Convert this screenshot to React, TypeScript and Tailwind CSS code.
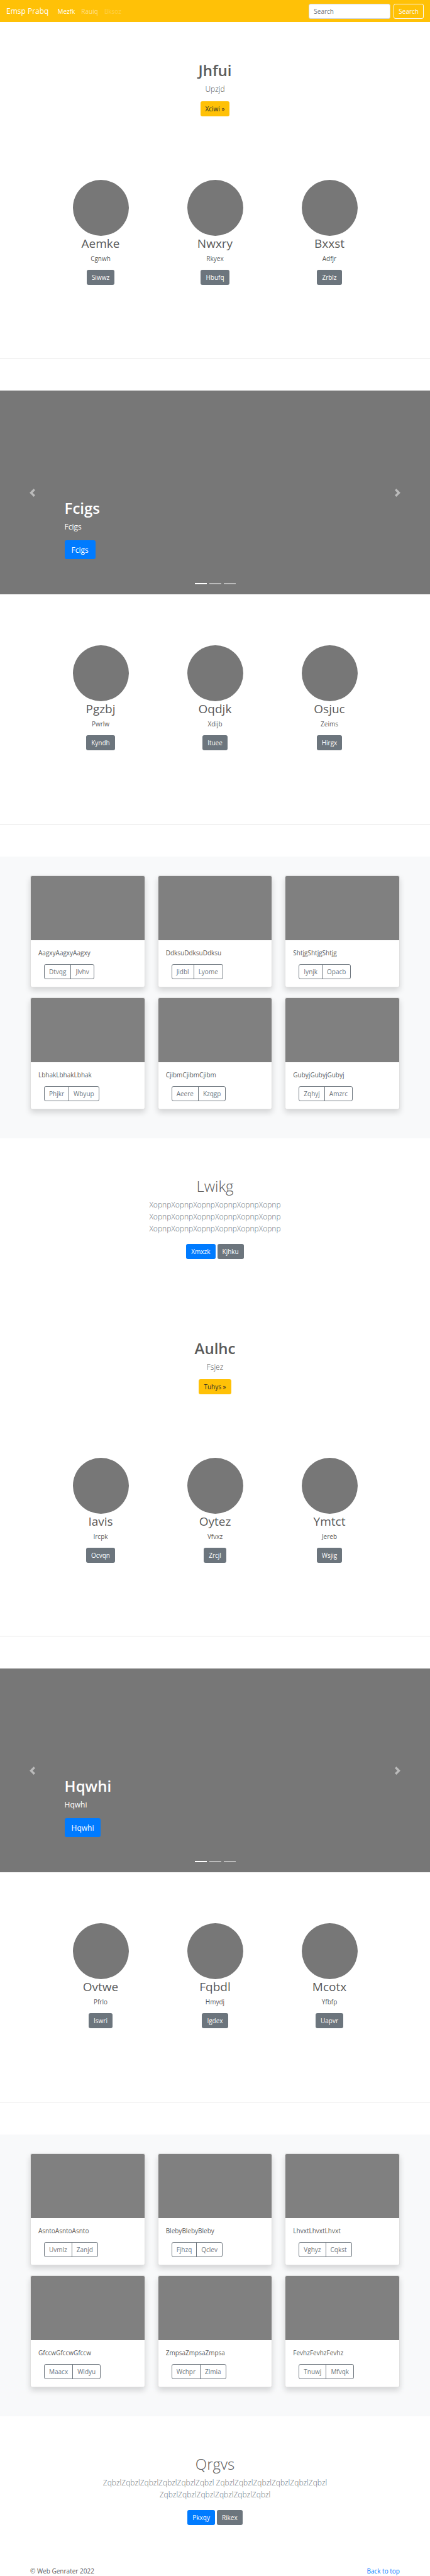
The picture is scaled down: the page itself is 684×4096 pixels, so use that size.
type Feature = { title: string; text: string; action: string };
type Album = { text: string; actions: [string, string] };
type Tone = "warning" | "primary" | "secondary";
type PageBlock = {
  hero: Feature;
  featuresTop: Feature[];
  slide: string;
  featuresBottom: Feature[];
  albums: Album[];
  closing: { title: string; text: string; primary: string; secondary: string };
};

const blocks: PageBlock[] = [
  {
    hero: { title: "Jhfui", text: "Upzjd", action: "Xciwi »" },
    featuresTop: [
      { title: "Aemke", text: "Cgnwh", action: "Siwwz" },
      { title: "Nwxry", text: "Rkyex", action: "Hbufq" },
      { title: "Bxxst", text: "Adfjr", action: "Zrblz" },
    ],
    slide: "Fcigs",
    featuresBottom: [
      { title: "Pgzbj", text: "Pwrlw", action: "Kyndh" },
      { title: "Oqdjk", text: "Xdijb", action: "Ituee" },
      { title: "Osjuc", text: "Zeims", action: "Hirgx" },
    ],
    albums: [
      { text: "AagxyAagxyAagxy", actions: ["Dtvqg", "Jlvhv"] },
      { text: "DdksuDdksuDdksu", actions: ["Jidbl", "Lyome"] },
      { text: "ShtjgShtjgShtjg", actions: ["Iynjk", "Opacb"] },
      { text: "LbhakLbhakLbhak", actions: ["Phjkr", "Wbyup"] },
      { text: "CjibmCjibmCjibm", actions: ["Aeere", "Kzqgp"] },
      { text: "GubyjGubyjGubyj", actions: ["Zqhyj", "Amzrc"] },
    ],
    closing: {
      title: "Lwikg",
      text: "XopnpXopnpXopnpXopnpXopnpXopnp XopnpXopnpXopnpXopnpXopnpXopnp XopnpXopnpXopnpXopnpXopnpXopnp",
      primary: "Xmxzk",
      secondary: "Kjhku",
    },
  },
  {
    hero: { title: "Aulhc", text: "Fsjez", action: "Tuhys »" },
    featuresTop: [
      { title: "Iavis", text: "Ircpk", action: "Ocvqn" },
      { title: "Oytez", text: "Vfvxz", action: "Zrcjl" },
      { title: "Ymtct", text: "Jereb", action: "Wsjig" },
    ],
    slide: "Hqwhi",
    featuresBottom: [
      { title: "Ovtwe", text: "Pfrlo", action: "Iswri" },
      { title: "Fqbdl", text: "Hmydj", action: "Igdex" },
      { title: "Mcotx", text: "Yfbfp", action: "Uapvr" },
    ],
    albums: [
      { text: "AsntoAsntoAsnto", actions: ["Uvmlz", "Zanjd"] },
      { text: "BlebyBlebyBleby", actions: ["Fjhzq", "Qclev"] },
      { text: "LhvxtLhvxtLhvxt", actions: ["Vghyz", "Cqkst"] },
      { text: "GfccwGfccwGfccw", actions: ["Maacx", "Widyu"] },
      { text: "ZmpsaZmpsaZmpsa", actions: ["Wchpr", "Zlmia"] },
      { text: "FevhzFevhzFevhz", actions: ["Tnuwj", "Mfvqk"] },
    ],
    closing: {
      title: "Qrgvs",
      text: "ZqbzlZqbzlZqbzlZqbzlZqbzlZqbzl ZqbzlZqbzlZqbzlZqbzlZqbzlZqbzl ZqbzlZqbzlZqbzlZqbzlZqbzlZqbzl",
      primary: "Pkxqy",
      secondary: "Rikex",
    },
  },
];

const tones: Record<Tone, string> = {
  warning: "bg-[#ffc107] text-[#212529]",
  primary: "bg-[#007bff] text-white",
  secondary: "bg-[#6c757d] text-white",
};

function Btn({ tone, children }: { tone: Tone; children: string }) {
  return (
    <button type="button" className={`h-6 rounded-[3px] px-2 text-[10px] leading-4 ${tones[tone]}`}>
      {children}
    </button>
  );
}

function Navbar() {
  return (
    <header className="flex h-[35px] items-center bg-[#ffc107] px-[10px] text-white">
      <a href="#top" className="mr-[14px] text-[12px] leading-5">
        Emsp Prabq
      </a>
      <nav className="flex flex-1 gap-[10px] text-[10px] leading-4">
        <a href="#home">Mezfk</a>
        <a href="#link" className="text-white/50">
          Rauiq
        </a>
        <a href="#disabled" aria-disabled="true" className="text-white/25">
          Bksoz
        </a>
      </nav>
      <form className="flex gap-[5px]" onSubmit={(e) => e.preventDefault()}>
        <input
          type="search"
          aria-label="Search"
          placeholder="Search"
          className="h-6 w-[130px] rounded-[3px] border border-[#ced4da] bg-white px-[7px] text-[10px] leading-4 text-[#495057] placeholder:text-[#6c757d]"
        />
        <button type="submit" className="h-6 rounded-[3px] border border-[#f8f9fa] px-[7px] text-[10px] leading-4 text-[#f8f9fa]">
          Search
        </button>
      </form>
    </header>
  );
}

function Hero({ title, text, action }: Feature) {
  return (
    <section className="flex flex-col items-center pt-[62px] text-center">
      <h1 className="text-[24px] leading-[30px] font-semibold">{title}</h1>
      <p className="mt-[5px] mb-[10px] text-[12px] leading-[19px] font-light">{text}</p>
      <Btn tone="warning">{action}</Btn>
    </section>
  );
}

function Features({ items }: { items: Feature[] }) {
  return (
    <section className="grid grid-cols-3 px-[69px]">
      {items.map((item) => (
        <div key={item.title} className="flex flex-col items-center text-center">
          <div className="size-[89px] rounded-full bg-[#777]" />
          <h2 className="text-[19px] leading-6">{item.title}</h2>
          <p className="mt-[5px] mb-[10px] text-[10px] leading-[15px]">{item.text}</p>
          <Btn tone="secondary">{item.action}</Btn>
        </div>
      ))}
    </section>
  );
}

function Chevron({ d }: { d: string }) {
  return (
    <svg viewBox="0 0 8 8" className="size-[13px] fill-white" aria-hidden="true">
      <path d={d} />
    </svg>
  );
}

function Carousel({ label }: { label: string }) {
  return (
    <section className="relative flex h-[324px] bg-[#777] text-white">
      <button type="button" aria-label="Previous" className="flex w-[15%] items-center justify-center opacity-50">
        <Chevron d="M5.25 0l-4 4 4 4 1.5-1.5-2.5-2.5 2.5-2.5-1.5-1.5z" />
      </button>
      <div className="flex flex-1 flex-col items-start justify-end pb-14">
        <h2 className="text-[24px] leading-[30px] font-semibold">{label}</h2>
        <p className="mt-[5px] mb-3 text-[12px] leading-[19px]">{label}</p>
        <button type="button" className="h-[30px] rounded-[3px] bg-[#007bff] px-[11px] text-[12px] leading-[19px]">
          {label}
        </button>
      </div>
      <button type="button" aria-label="Next" className="flex w-[15%] items-center justify-center opacity-50">
        <Chevron d="M2.75 0l-1.5 1.5 2.5 2.5-2.5 2.5 1.5 1.5 4-4-4-4z" />
      </button>
      <div className="absolute inset-x-0 bottom-4 flex justify-center gap-1">
        <span className="h-[2px] w-[19px] bg-white" />
        <span className="h-[2px] w-[19px] bg-white/50" />
        <span className="h-[2px] w-[19px] bg-white/50" />
      </div>
    </section>
  );
}

function Albums({ items }: { items: Album[] }) {
  return (
    <section className="grid grid-cols-3 gap-x-5 gap-y-4 bg-[#f8f9fa] px-12 pt-[30px] pb-[46px]">
      {items.map((item) => (
        <article
          key={item.text}
          className="overflow-hidden rounded-[3px] border border-black/12 bg-white shadow-[0_5px_10px_rgba(0,0,0,0.15)]"
        >
          <div className="h-[102px] bg-[#808080]" />
          <div className="px-3 pt-[13px] pb-3">
            <p className="text-[10px] leading-[15px]">{item.text}</p>
            <div className="mt-[10px] ml-[9px] flex text-[10px] leading-4 text-[#6c757d]">
              <button type="button" className="h-6 rounded-l-[3px] border border-[#6c757d] px-[7px]">
                {item.actions[0]}
              </button>
              <button type="button" className="-ml-px h-6 rounded-r-[3px] border border-[#6c757d] px-[7px]">
                {item.actions[1]}
              </button>
            </div>
          </div>
        </article>
      ))}
    </section>
  );
}

function Closing({ title, text, primary, secondary }: PageBlock["closing"]) {
  return (
    <section className="flex flex-col items-center pt-[61px] text-center">
      <h2 className="text-[24px] leading-[30px] font-light">{title}</h2>
      <p className="mt-[5px] mb-[15px] max-w-[400px] text-[12px] leading-[19px] font-light text-[#6c757d]">{text}</p>
      <div className="flex gap-[3px]">
        <Btn tone="primary">{primary}</Btn>
        <Btn tone="secondary">{secondary}</Btn>
      </div>
    </section>
  );
}

function Block({ data }: { data: PageBlock }) {
  return (
    <>
      <Hero {...data.hero} />
      <div className="pt-[101px]">
        <Features items={data.featuresTop} />
      </div>
      <hr className="mt-[116px] mb-[51px] border-black/10" />
      <Carousel label={data.slide} />
      <div className="pt-[81px]">
        <Features items={data.featuresBottom} />
      </div>
      <hr className="mt-[117px] mb-[51px] border-black/10" />
      <Albums items={data.albums} />
      <Closing {...data.closing} />
    </>
  );
}

export default function App() {
  return (
    <div id="top" className="bg-white font-['Open_Sans','Noto_Sans',sans-serif] text-[#5a5a5a]">
      <Navbar />
      <main className="flex flex-col gap-[65px]">
        {blocks.map((block) => (
          <div key={block.hero.title}>
            <Block data={block} />
          </div>
        ))}
      </main>
      <footer className="flex justify-between px-12 pt-[66px] text-[10px] leading-[15px]">
        <p>© Web Genrater 2022</p>
        <a href="#top" className="text-[#007bff]">
          Back to top
        </a>
      </footer>
    </div>
  );
}
